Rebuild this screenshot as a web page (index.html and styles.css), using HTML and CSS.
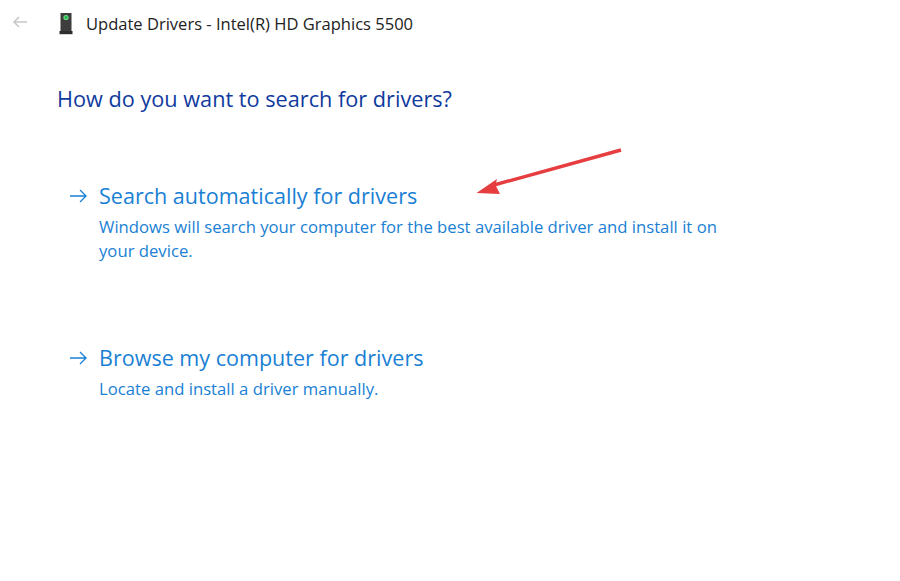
FILE: index.html
```html
<!DOCTYPE html>
<html lang="en">
<head>
<meta charset="utf-8">
<title>Update Drivers</title>
<link rel="stylesheet" href="styles.css">
</head>
<body>
<div class="window">
  <header class="titlebar">
    <svg class="back" width="16" height="12" viewBox="0 0 16 12"><path d="M15 6H2M7 1L2 6l5 5" fill="none" stroke="#c8c8c8" stroke-width="1.600"/></svg>
    <svg class="device" width="18" height="24" viewBox="0 0 18 24">
      <rect x="3.500" y="1" width="11" height="18" fill="#3d3d3d"/>
      <rect x="2.500" y="19" width="13" height="3.200" fill="#2e2e2e"/>
      <circle cx="9" cy="5.500" r="2.600" fill="#7fd88f"/>
      <circle cx="9" cy="5.500" r="1.700" fill="#22c24f"/>
    </svg>
    <span class="title">Update Drivers - Intel(R) HD Graphics 5500</span>
  </header>
  <h1 class="heading">How do you want to search for drivers?</h1>
  <section class="option first">
    <div class="option-title"><svg class="go" width="19" height="14" viewBox="0 0 19 14"><path d="M1 7h16M11 1l6 6-6 6" fill="none" stroke="#1a7fd4" stroke-width="1.300"/></svg><span>Search automatically for drivers</span></div>
    <p class="option-text">Windows will search your computer for the best available driver and install it on your device.</p>
  </section>
  <section class="option second">
    <div class="option-title"><svg class="go" width="19" height="14" viewBox="0 0 19 14"><path d="M1 7h16M11 1l6 6-6 6" fill="none" stroke="#1a7fd4" stroke-width="1.300"/></svg><span>Browse my computer for drivers</span></div>
    <p class="option-text">Locate and install a driver manually.</p>
  </section>
  <svg class="callout" width="150" height="50" viewBox="0 0 150 50"><path d="M145 3L18 38" stroke="#e63e40" stroke-width="3.400" fill="none"/><path d="M0.500 46L21 32l-1.500 6L24 47z" fill="#e63e40"/></svg>
</div>
</body>
</html>
```
FILE: styles.css
```css
html, body { margin: 0; padding: 0; background: #fff; }
.window { position: relative; width: 900px; height: 581px; overflow: hidden; font-family: "Open Sans", "Noto Sans", sans-serif; }
.titlebar { display: flex; align-items: center; height: 48px; padding-left: 12px; }
.back { margin: 0 29px 5px 0; }
.device { margin-right: 11px; }
.title { margin-bottom: 2px; font-size: 16.550px; color: #222; }
.heading { margin: 35px 0 0 57px; font-size: 21.700px; font-weight: 400; line-height: 32px; color: #0f3a9e; }
.option { margin-left: 69px; width: 660px; color: #1a7fd4; }
.first { margin-top: 65px; }
.second { margin-top: 79px; }
.option-title { display: flex; align-items: center; font-size: 21.560px; line-height: 32px; }
.go { margin-right: 11px; }
.option-text { margin: 3px 0 0 30px; font-size: 16.700px; line-height: 24px; }
.callout { position: absolute; left: 476px; top: 147px; }
```
